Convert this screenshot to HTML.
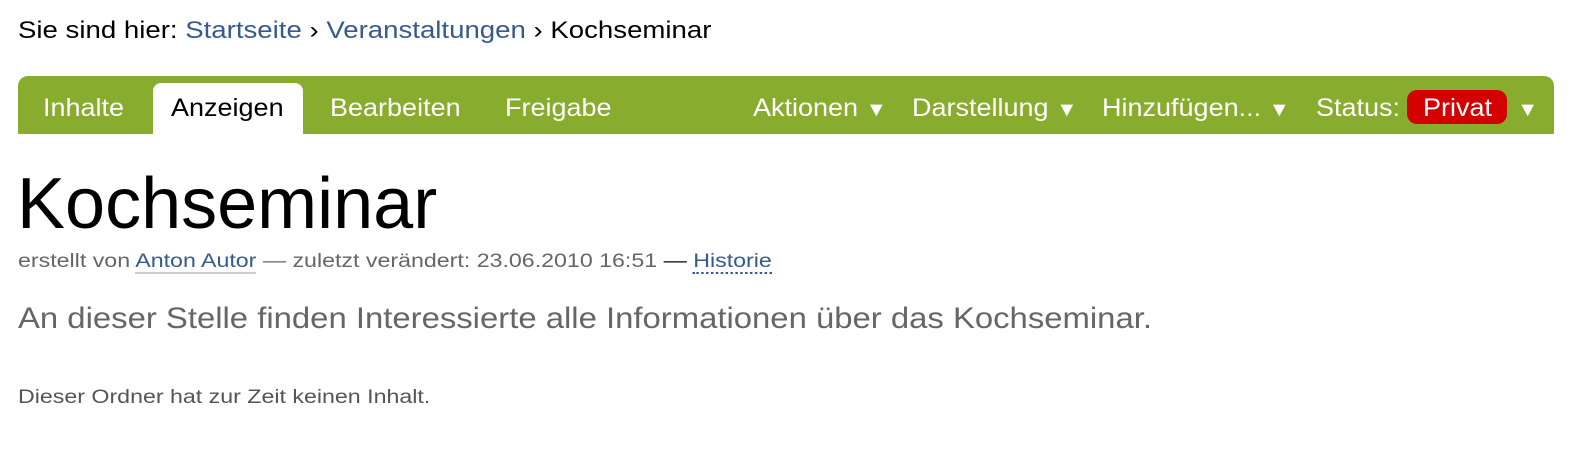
<!DOCTYPE html>
<html><head><meta charset="utf-8"><style>
body{margin:0;width:1582px;height:449px;background:#fff;font-family:"Liberation Sans",Arial,sans-serif;position:relative;overflow:hidden}
.a{position:absolute;white-space:nowrap;transform-origin:0 0}
a{color:#36598f;text-decoration:none}
#bar{position:absolute;left:18px;top:76px;width:1536px;height:58px;background:#88ac2e;border-radius:10px 10px 0 0}
.t{position:absolute;top:94px;font-size:25px;transform:scaleX(1.08);transform-origin:0 0;color:#fff;white-space:nowrap}
#sel{position:absolute;left:153px;top:83px;width:150px;height:51px;background:#fff;border-radius:8px 8px 0 0}
.pv{position:absolute;left:1407px;top:90px;width:100px;height:34px;background:#d40000;border-radius:10px}
.ar{font-size:20px}
</style></head><body>
<div class="a" style="left:18px;top:17px;font-size:24px;transform:scaleX(1.15);color:#000">Sie sind hier: <a>Startseite</a> › <a>Veranstaltungen</a> › Kochseminar</div>
<div id="bar"></div>
<div id="sel"></div>
<div class="pv"></div>
<div class="t" style="left:43px">Inhalte</div>
<div class="t" style="left:171px;color:#000">Anzeigen</div>
<div class="t" style="left:330px">Bearbeiten</div>
<div class="t" style="left:505px">Freigabe</div>
<div class="t" style="left:753px">Aktionen <span class="ar">▼</span></div>
<div class="t" style="left:912px">Darstellung <span class="ar">▼</span></div>
<div class="t" style="left:1102px">Hinzufügen... <span class="ar">▼</span></div>
<div class="t" style="left:1316px">Status:</div>
<div class="t" style="left:1423px">Privat</div>
<div class="t" style="left:1517px"><span class="ar">▼</span></div>
<div class="a" style="left:17px;top:163px;font-size:72px;color:#000">Kochseminar</div>
<div class="a" style="left:18px;top:251px;font-size:19px;transform:scaleX(1.22);color:#666">erstellt von <a style="border-bottom:2px solid #ccc">Anton Autor</a> — zuletzt verändert: 23.06.2010 16:51 <span style="color:#000">—</span> <a style="border-bottom:2px dotted #36598f">Historie</a></div>
<div class="a" style="left:18px;top:302px;font-size:30px;transform:scaleX(1.095);color:#666">An dieser Stelle finden Interessierte alle Informationen über das Kochseminar.</div>
<div class="a" style="left:18px;top:387px;font-size:19px;transform:scaleX(1.22);color:#555">Dieser Ordner hat zur Zeit keinen Inhalt.</div>
</body></html>
